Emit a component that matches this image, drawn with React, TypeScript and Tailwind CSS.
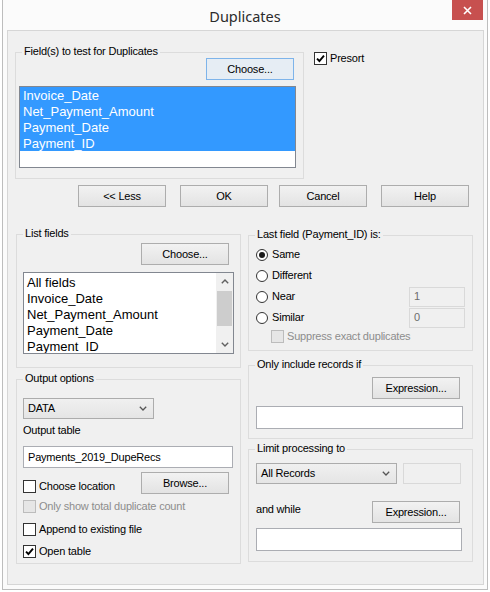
import React from 'react';

type Kids = { children?: React.ReactNode; className?: string };

function Btn({ children, className = '', focus = false }: Kids & { focus?: boolean }) {
  return (
    <div
      className={`flex h-[22px] w-[88px] shrink-0 items-center justify-center border text-[11px] text-black ${
        focus ? 'border-[#7eb4ea] bg-[#e6edf4]' : 'border-[#adadad] bg-gradient-to-b from-[#f2f2f2] to-[#e3e3e3]'
      } ${className}`}
    >
      {children}
    </div>
  );
}

function Group({ label, children, className = '' }: Kids & { label: string }) {
  return (
    <div className={`flex flex-col border border-[#dcdcdc] ${className}`}>
      <div className="-mt-[8px] ml-[6px] w-fit bg-[#f0f0f0] px-[2px] text-[11px] leading-[13px]">{label}</div>
      {children}
    </div>
  );
}

function Check({ label, checked = false, disabled = false }: { label: string; checked?: boolean; disabled?: boolean }) {
  return (
    <div className="flex h-[13px] items-center">
      <div
        className={`flex h-[13px] w-[13px] shrink-0 items-center justify-center border ${
          disabled ? 'border-[#bcbcbc] bg-[#e6e6e6]' : 'border-[#333333] bg-white'
        }`}
      >
        {checked && (
          <svg width="9" height="9" viewBox="0 0 9 9">
            <path d="M1 4.6 L3.4 7 L8 1.6" stroke="#000" strokeWidth="1.9" fill="none" />
          </svg>
        )}
      </div>
      <span className={`ml-[3px] whitespace-nowrap text-[11px] leading-[13px] ${disabled ? 'text-[#8d8d8d]' : 'text-black'}`}>
        {label}
      </span>
    </div>
  );
}

function Radio({ label, checked = false }: { label: string; checked?: boolean }) {
  return (
    <div className="flex items-center">
      <div className="flex h-[12px] w-[12px] items-center justify-center rounded-full border border-[#333333] bg-white">
        {checked && <div className="h-[6px] w-[6px] rounded-full bg-[#1a1a1a]" />}
      </div>
      <span className="ml-[4px] text-[11px] leading-[13px]">{label}</span>
    </div>
  );
}

function Chevron() {
  return (
    <svg width="8" height="5" viewBox="0 0 8 5">
      <path d="M0.8 0.8 L4 4 L7.2 0.8" stroke="#555" strokeWidth="1.3" fill="none" />
    </svg>
  );
}

function Combo({ value, className = '' }: { value: string; className?: string }) {
  return (
    <div
      className={`flex h-[21px] items-center justify-between border border-[#acacac] bg-gradient-to-b from-[#f0f0f0] to-[#e5e5e5] pl-[4px] pr-[6px] text-[11px] ${className}`}
    >
      <span>{value}</span>
      <Chevron />
    </div>
  );
}

function TextBox({ value = '', className = '', disabled = false }: { value?: string; className?: string; disabled?: boolean }) {
  return (
    <div
      className={`flex items-center border pl-[4px] text-[11px] ${
        disabled ? 'border-[#d9d9d9] bg-[#f0f0f0] text-[#6d6d6d]' : 'border-[#abadb3] bg-white text-black'
      } ${className}`}
    >
      {value}
    </div>
  );
}

const dupFields = ['Invoice_Date', 'Net_Payment_Amount', 'Payment_Date', 'Payment_ID'];
const listFields = ['All fields', 'Invoice_Date', 'Net_Payment_Amount', 'Payment_Date', 'Payment_ID'];

export default function App() {
  return (
    <div className="h-[592px] w-[490px] overflow-hidden bg-white font-['Liberation_Sans',Arial,sans-serif] text-black">
      <div className="ml-[2px] flex h-[590px] w-[486px] flex-col border-x border-b border-[#bdbdbd] bg-[#fbfbfb]">
        {/* title bar */}
        <div className="grid h-[30px] grid-cols-[1fr_auto_1fr] items-start">
          <div />
          <div className="mt-[6px] font-['Noto_Sans',sans-serif] text-[14.5px] leading-[20px] text-[#2b2b2b]">Duplicates</div>
          <div className="mr-[4px] flex h-[20px] w-[31px] items-center justify-center justify-self-end bg-[#c7504f]">
            <svg width="9" height="9" viewBox="0 0 9 9">
              <path d="M1 1 L8 8 M8 1 L1 8" stroke="#fff" strokeWidth="1.6" />
            </svg>
          </div>
        </div>

        <div className="ml-[4px] h-[555px] w-[477px] border border-[#d6d6d6] bg-[#f0f0f0] text-[11px] tracking-[-0.2px]">
          {/* fields to test */}
          <div className="flex items-start pl-[7px] pt-[21px]">
            <Group label="Field(s) to test for Duplicates" className="h-[127px] w-[289px]">
              <Btn focus className="ml-auto mr-[9px]">
                Choose...
              </Btn>
              <div className="ml-[3px] mt-[6px] h-[82px] w-[277px] border border-[#828790] bg-white tracking-normal">
                {dupFields.map((f) => (
                  <div key={f} className="h-[16px] bg-[#3399ff] pl-[3px] pt-[1px] text-[13px] leading-[16px] text-white">
                    {f}
                  </div>
                ))}
              </div>
            </Group>
            <div className="ml-[10px]">
              <Check label="Presort" checked />
            </div>
          </div>

          {/* action buttons */}
          <div className="mt-[6px] flex pl-[70px]">
            <Btn>&lt;&lt; Less</Btn>
            <Btn className="ml-[14px]">OK</Btn>
            <Btn className="ml-[11px]">Cancel</Btn>
            <Btn className="ml-[14px]">Help</Btn>
          </div>

          {/* lower columns */}
          <div className="mt-[27px] flex items-start pl-[8px]">
            <div className="flex w-[225px] flex-col">
              <Group label="List fields" className="h-[134px]">
                <Btn className="ml-auto mr-[11px] mt-[3px]">Choose...</Btn>
                <div className="ml-[6px] mt-[7px] flex h-[82px] w-[211px] border border-[#828790] bg-white tracking-normal">
                  <div className="flex-1 overflow-hidden pt-[2px]">
                    {listFields.map((f) => (
                      <div key={f} className="h-[16px] whitespace-nowrap pl-[3px] text-[13px] leading-[16px]">
                        {f}
                      </div>
                    ))}
                  </div>
                  <div className="flex w-[17px] flex-col bg-[#f0f0f0]">
                    <div className="flex h-[17px] items-center justify-center">
                      <svg width="8" height="5" viewBox="0 0 8 5">
                        <path d="M0.8 4.2 L4 1 L7.2 4.2" stroke="#606060" strokeWidth="1.4" fill="none" />
                      </svg>
                    </div>
                    <div className="flex-1">
                      <div className="ml-[1px] mt-[1px] h-[35px] w-[15px] bg-[#cdcdcd]" />
                    </div>
                    <div className="flex h-[17px] items-center justify-center">
                      <svg width="8" height="5" viewBox="0 0 8 5">
                        <path d="M0.8 0.8 L4 4 L7.2 0.8" stroke="#606060" strokeWidth="1.4" fill="none" />
                      </svg>
                    </div>
                  </div>
                </div>
              </Group>

              <Group label="Output options" className="mt-[11px] h-[185px]">
                <Combo value="DATA" className="ml-[6px] mt-[13px] w-[131px]" />
                <div className="ml-[6px] mt-[5px] leading-[13px]">Output table</div>
                <TextBox value="Payments_2019_DupeRecs" className="ml-[6px] mt-[9px] h-[22px] w-[210px]" />
                <div className="mt-[4px] flex items-start pl-[6px]">
                  <div className="mt-[8px]">
                    <Check label="Choose location" />
                  </div>
                  <Btn className="ml-auto mr-[11px]">Browse...</Btn>
                </div>
                <div className="ml-[6px] mt-[6px]">
                  <Check label="Only show total duplicate count" disabled />
                </div>
                <div className="ml-[6px] mt-[10px]">
                  <Check label="Append to existing file" />
                </div>
                <div className="ml-[6px] mt-[9px]">
                  <Check label="Open table" checked />
                </div>
              </Group>
            </div>

            <div className="ml-[7px] mt-[1px] flex w-[225px] flex-col">
              <Group label="Last field (Payment_ID) is:" className="h-[116px]">
                <div className="mt-[3px] flex h-[21px] items-center px-[7px]">
                  <Radio label="Same" checked />
                </div>
                <div className="flex h-[21px] items-center px-[7px]">
                  <Radio label="Different" />
                </div>
                <div className="flex h-[21px] items-center px-[7px]">
                  <Radio label="Near" />
                  <TextBox value="1" disabled className="ml-auto h-[20px] w-[56px]" />
                </div>
                <div className="flex h-[21px] items-center px-[7px]">
                  <Radio label="Similar" />
                  <TextBox value="0" disabled className="ml-auto h-[20px] w-[56px]" />
                </div>
                <div className="ml-[22px] mt-[2px]">
                  <Check label="Suppress exact duplicates" disabled />
                </div>
              </Group>

              <Group label="Only include records if" className="mt-[14px] h-[74px]">
                <Btn className="ml-auto mr-[12px] mt-[6px]">Expression...</Btn>
                <TextBox className="ml-[7px] mt-[7px] h-[23px] w-[207px]" />
              </Group>

              <Group label="Limit processing to" className="mt-[10px] h-[113px]">
                <div className="mt-[8px] flex pl-[7px]">
                  <Combo value="All Records" className="w-[141px]" />
                  <TextBox disabled className="ml-[6px] h-[21px] w-[58px]" />
                </div>
                <div className="mt-[17px] flex items-start pl-[7px]">
                  <div className="mt-[2px] leading-[13px]">and while</div>
                  <Btn className="ml-auto mr-[12px]">Expression...</Btn>
                </div>
                <TextBox className="ml-[7px] mt-[5px] h-[23px] w-[206px]" />
              </Group>
            </div>
          </div>
        </div>
      </div>
    </div>
  );
}
